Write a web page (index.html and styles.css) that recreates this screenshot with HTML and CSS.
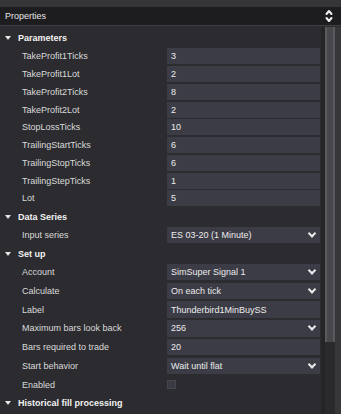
FILE: index.html
```html
<!DOCTYPE html>
<html>
<head>
<meta charset="utf-8">
<link rel="stylesheet" href="styles.css">
</head>
<body>
<div class="topstrip"></div>
<div class="header">
  <span class="title">Properties</span>
  <svg class="spin" width="8" height="16" viewBox="0 0 8 16">
    <path d="M1.5 6 L4 3 L6.5 6" fill="none" stroke="#f0f0f0" stroke-width="2" stroke-linecap="round" stroke-linejoin="round"/>
    <path d="M1.5 10 L4 13 L6.5 10" fill="none" stroke="#f0f0f0" stroke-width="2" stroke-linecap="round" stroke-linejoin="round"/>
  </svg>
</div>
<div class="main">
  <div class="list">
    <div class="cat"><span class="tri"></span><span>Parameters</span></div>
    <div class="row p"><span class="lbl">TakeProfit1Ticks</span><div class="val">3</div></div>
    <div class="row p"><span class="lbl">TakeProfit1Lot</span><div class="val">2</div></div>
    <div class="row p"><span class="lbl">TakeProfit2Ticks</span><div class="val">8</div></div>
    <div class="row p"><span class="lbl">TakeProfit2Lot</span><div class="val">2</div></div>
    <div class="row p"><span class="lbl">StopLossTicks</span><div class="val">10</div></div>
    <div class="row p"><span class="lbl">TrailingStartTicks</span><div class="val">6</div></div>
    <div class="row p"><span class="lbl">TrailingStopTicks</span><div class="val">6</div></div>
    <div class="row p"><span class="lbl">TrailingStepTicks</span><div class="val">1</div></div>
    <div class="row p"><span class="lbl">Lot</span><div class="val">5</div></div>
    <div class="cat"><span class="tri"></span><span>Data Series</span></div>
    <div class="row d"><span class="lbl">Input series</span><div class="val combo"><span>ES 03-20 (1 Minute)</span><span class="chev"></span></div></div>
    <div class="cat"><span class="tri"></span><span>Set up</span></div>
    <div class="row s"><span class="lbl">Account</span><div class="val combo"><span>SimSuper Signal 1</span><span class="chev"></span></div></div>
    <div class="row s"><span class="lbl">Calculate</span><div class="val combo"><span>On each tick</span><span class="chev"></span></div></div>
    <div class="row s"><span class="lbl">Label</span><div class="val">Thunderbird1MinBuySS</div></div>
    <div class="row s"><span class="lbl">Maximum bars look back</span><div class="val combo"><span>256</span><span class="chev"></span></div></div>
    <div class="row s"><span class="lbl">Bars required to trade</span><div class="val">20</div></div>
    <div class="row s"><span class="lbl">Start behavior</span><div class="val combo"><span>Wait until flat</span><span class="chev"></span></div></div>
    <div class="row s"><span class="lbl">Enabled</span><div class="chk"></div></div>
    <div class="cat"><span class="tri"></span><span>Historical fill processing</span></div>
    <div class="row s"><span class="lbl"></span><div class="val"></div></div>
  </div>
  <div class="scroll">
    <div class="gutter"></div>
    <div class="track"><div class="thumb"></div></div>
    <div class="edge"></div>
  </div>
</div>
</body>
</html>
```

FILE: styles.css
```css
html, body {
  margin: 0;
  padding: 0;
  overflow: hidden;
  background: #2c2c30;
  width: 341px;
  height: 414px;
}
body {
  font-family: "Liberation Sans", Arial, sans-serif;
  font-size: 9px;
  color: #dcdcdc;
}
.topstrip {
  height: 7px;
  background: #353537;
}
.header {
  height: 18px;
  background: #1d1d20;
  border-bottom: 1px solid #3e3e42;
  display: flex;
  align-items: center;
  justify-content: space-between;
  padding: 0 8px 0 5px;
}
.title {
  color: #e6e6e6;
}
.spin {
  display: block;
}
.main {
  display: flex;
  height: 388px;
}
.list {
  width: 321px;
  padding-top: 3px;
}
.cat {
  height: 18.5px;
  display: flex;
  align-items: center;
  font-weight: bold;
  color: #f2f2f2;
}
.tri {
  width: 0;
  height: 0;
  border-left: 3px solid transparent;
  border-right: 3px solid transparent;
  border-top: 4px solid #e6e6e6;
  margin: 0 7px 0 5px;
}
.row {
  display: grid;
  grid-template-columns: 167px 153px;
  align-items: center;
}
.row.p { height: 17.75px; }
.row.d { height: 18.5px; }
.row.s { height: 18.75px; }
.lbl {
  padding-left: 22px;
  color: #dadada;
  white-space: nowrap;
}
.val {
  height: 16px;
  background: #3c3c46;
  display: flex;
  align-items: center;
  padding: 0 4px;
  color: #ececec;
  white-space: nowrap;
}
.row.s .val { height: 16.5px; }
.combo {
  justify-content: space-between;
}
.chev {
  width: 4px;
  height: 4px;
  border-right: 2px solid #e8e8e8;
  border-bottom: 2px solid #e8e8e8;
  transform: translateY(-1.5px) rotate(45deg);
  margin-right: 1px;
}
.chk {
  width: 7px;
  height: 7px;
  background: #3a3a42;
  border: 1px solid #45454d;
}
.scroll {
  flex: 1;
  display: flex;
  margin-top: 1px;
}
.gutter {
  width: 4px;
  background: #252528;
}
.track {
  width: 10px;
  background: #2a2a2c;
}
.thumb {
  height: 315px;
  background: #48484c;
  border-left: 2px solid #5a5a5e;
  border-right: 2px solid #5a5a5e;
  box-sizing: border-box;
}
.edge {
  flex: 1;
  background: #37373a;
}
```
